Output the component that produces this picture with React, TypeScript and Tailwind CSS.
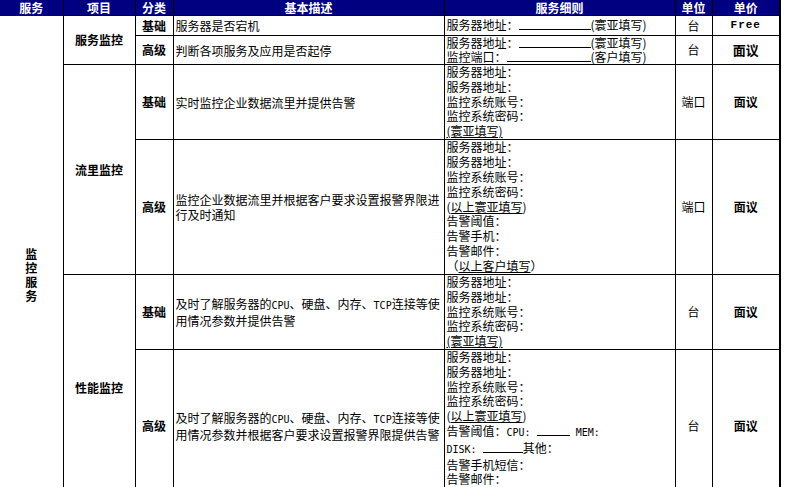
const mono = "font-['DejaVu_Sans_Mono',monospace] text-[10px]";

function Line({ children, tight }: { children?: React.ReactNode; tight?: boolean }) {
  return (
    <div className={`whitespace-nowrap ${tight ? "leading-[14px]" : "leading-[14.8px]"}`}>{children}</div>
  );
}

function Blank({ w }: { w: string }) {
  return <span className={`inline-block border-b border-black align-baseline ${w} h-[10px]`} />;
}

const th = "border-x border-black bg-[#000080] text-center font-bold text-white p-0 leading-[15px]";
const td = "border border-black p-0 align-middle";
const kind = `${td} text-center font-bold`;
const desc = `${td} text-left pl-[2px] leading-[15px]`;
const detail = `${td} text-left pl-[2px]`;
const unit = `${td} text-center`;
const price = `${td} text-center font-bold border-r-2`;

export default function App() {
  return (
    <div className="h-[487px] w-[805px] overflow-hidden bg-white text-[12px] text-black font-['Noto_Sans_CJK_SC','Noto_Sans',sans-serif]">
      <table className="w-[780px] table-fixed border-collapse">
        <colgroup>
          <col className="w-[63px]" />
          <col className="w-[72px]" />
          <col className="w-[38px]" />
          <col className="w-[271px]" />
          <col className="w-[231px]" />
          <col className="w-[37px]" />
          <col className="w-[68px]" />
        </colgroup>
        <thead>
          <tr className="h-[15px]">
            <th className="border-0 bg-[#000080] p-0 text-center font-bold leading-[15px] text-white">服务</th>
            <th className={th}>项目</th>
            <th className={th}>分类</th>
            <th className={th}>基本描述</th>
            <th className={th}>服务细则</th>
            <th className={th}>单位</th>
            <th className={`${th} border-r-2`}>单价</th>
          </tr>
        </thead>
        <tbody>
          {/* 服务监控 */}
          <tr className="h-[20px]">
            <td rowSpan={6} className="border-0 p-0 align-top">
              <div className="mx-auto w-[12px] break-all pt-[231px] text-center font-bold leading-[14px]">
                监控服务
              </div>
            </td>
            <td rowSpan={2} className={`${td} text-center font-bold`}>服务监控</td>
            <td className={kind}>基础</td>
            <td className={desc}>服务器是否宕机</td>
            <td className={detail}>
              <Line>
                服务器地址：<Blank w="w-[72px]" />(寰亚填写)
              </Line>
            </td>
            <td className={unit}>台</td>
            <td className={`${price} font-['Liberation_Mono',monospace] text-[11px] tracking-[1px]`}>Free</td>
          </tr>
          <tr className="h-[29px]">
            <td className={kind}>高级</td>
            <td className={desc}>判断各项服务及应用是否起停</td>
            <td className={detail}>
              <Line tight>
                服务器地址：<Blank w="w-[72px]" />(寰亚填写)
              </Line>
              <Line tight>
                监控端口：<Blank w="w-[84px]" />(客户填写)
              </Line>
            </td>
            <td className={unit}>台</td>
            <td className={`${price} text-[13px]`}>面议</td>
          </tr>

          {/* 流量监控 */}
          <tr className="h-[75px]">
            <td rowSpan={2} className={`${td} text-center font-bold`}>流里监控</td>
            <td className={kind}>基础</td>
            <td className={desc}>实时监控企业数据流里并提供告警</td>
            <td className={detail}>
              <Line>服务器地址：</Line>
              <Line>服务器地址：</Line>
              <Line>监控系统账号：</Line>
              <Line>监控系统密码：</Line>
              <Line>
                <span className="underline">(寰亚填写)</span>
              </Line>
            </td>
            <td className={unit}>端口</td>
            <td className={price}>面议</td>
          </tr>
          <tr className="h-[135px]">
            <td className={kind}>高级</td>
            <td className={desc}>
              监控企业数据流里并根据客户要求设置报警界限进
              <br />
              行及时通知
            </td>
            <td className={detail}>
              <Line>服务器地址：</Line>
              <Line>服务器地址：</Line>
              <Line>监控系统账号：</Line>
              <Line>监控系统密码：</Line>
              <Line>
                (<span className="underline">以上寰亚填写</span>)
              </Line>
              <Line>告警阈值：</Line>
              <Line>告警手机：</Line>
              <Line>告警邮件：</Line>
              <Line>
                （<span className="underline">以上客户填写</span>）
              </Line>
            </td>
            <td className={unit}>端口</td>
            <td className={price}>面议</td>
          </tr>

          {/* 性能监控 */}
          <tr className="h-[74px]">
            <td rowSpan={2} className={`${td} text-center font-bold`}>性能监控</td>
            <td className={kind}>基础</td>
            <td className={desc}>
              及时了解服务器的<span className={mono}>CPU</span>、硬盘、内存、<span className={mono}>TCP</span>连接等使
              <br />
              用情况参数并提供告警
            </td>
            <td className={detail}>
              <Line>服务器地址：</Line>
              <Line>服务器地址：</Line>
              <Line>监控系统账号：</Line>
              <Line>监控系统密码：</Line>
              <Line>
                <span className="underline">(寰亚填写)</span>
              </Line>
            </td>
            <td className={unit}>台</td>
            <td className={price}>面议</td>
          </tr>
          <tr className="h-[149px]">
            <td className={kind}>高级</td>
            <td className={desc}>
              及时了解服务器的<span className={mono}>CPU</span>、硬盘、内存、<span className={mono}>TCP</span>连接等使
              <br />
              用情况参数并根据客户要求设置报警界限提供告警
            </td>
            <td className={detail}>
              <Line>服务器地址：</Line>
              <Line>服务器地址：</Line>
              <Line>监控系统账号：</Line>
              <Line>监控系统密码：</Line>
              <Line>
                (<span className="underline">以上寰亚填写</span>)
              </Line>
              <Line>
                告警阈值：<span className={mono}>CPU: </span>
                <Blank w="w-[33px]" />
                <span className={mono}> MEM:</span>
              </Line>
              <Line>
                <span className={mono}>DISK: </span>
                <Blank w="w-[40px]" />
                其他：
              </Line>
              <Line>告警手机短信：</Line>
              <Line>告警邮件：</Line>
              <Line>
                （<span className="underline">以上客户填写</span>）
              </Line>
            </td>
            <td className={unit}>台</td>
            <td className={price}>面议</td>
          </tr>
        </tbody>
      </table>
    </div>
  );
}
